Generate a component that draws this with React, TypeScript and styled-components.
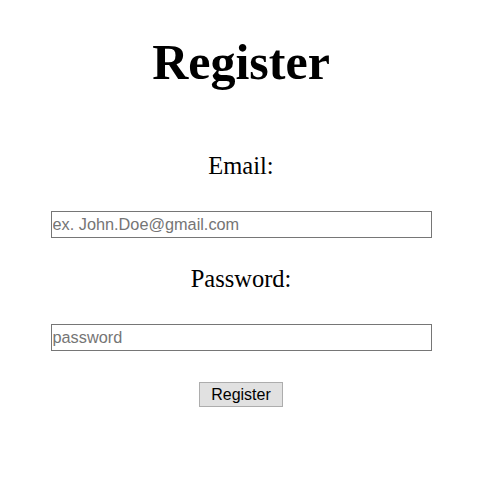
import styled, { createGlobalStyle } from "styled-components";

const GlobalStyle = createGlobalStyle`
  body {
    margin: 8px;
    background: #ffffff;
    font-family: "Liberation Serif", "Times New Roman", serif;
  }
`;

const Page = styled.div`
  width: 466px;
  display: flex;
  flex-direction: column;
  align-items: center;
`;

const Title = styled.h1`
  font-size: 50px;
  font-weight: bold;
  margin: 26px 0 0;
  line-height: 56px;
`;

const Form = styled.form`
  display: flex;
  flex-direction: column;
  align-items: center;
  margin-top: 62px;
`;

const Label = styled.label`
  font-size: 24.5px;
  line-height: 28px;
  margin-bottom: 31px;
`;

const Field = styled.input`
  width: 381px;
  height: 27px;
  box-sizing: border-box;
  border: 1px solid #767676;
  padding: 1px 1px;
  font-family: "Liberation Sans", Arial, sans-serif;
  font-size: 16.3px;
  margin-bottom: 27px;

  &::placeholder {
    color: #757575;
  }
`;

const Submit = styled.button`
  width: 84px;
  height: 25px;
  box-sizing: border-box;
  border: 1px solid #adadad;
  background: #e1e1e1;
  font-family: "Liberation Sans", Arial, sans-serif;
  font-size: 16px;
  color: #000;
  padding: 0;
  margin-top: 4px;
`;

export default function App() {
  return (
    <Page>
      <GlobalStyle />
      <Title>Register</Title>
      <Form onSubmit={(e) => e.preventDefault()}>
        <Label htmlFor="email">Email:</Label>
        <Field id="email" type="email" placeholder="ex. John.Doe@gmail.com" />
        <Label htmlFor="password">Password:</Label>
        <Field id="password" type="password" placeholder="password" />
        <Submit type="submit">Register</Submit>
      </Form>
    </Page>
  );
}
